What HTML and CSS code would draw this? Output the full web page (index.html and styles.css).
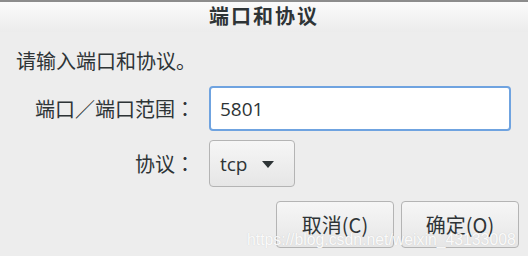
FILE: index.html
```html
<!DOCTYPE html>
<html lang="zh-CN">
<head>
  <meta charset="UTF-8">
  <title>端口和协议</title>
  <link rel="stylesheet" href="styles.css">
</head>
<body>
  <div class="dialog">
    <div class="titlebar">端口和协议</div>
    <div class="content">
      <p class="prompt">请输入端口和协议。</p>
      <div class="form">
        <label class="label" for="port">端口／端口范围<span class="colon" lang="zh-TW">：</span></label>
        <input class="entry" id="port" type="text" value="5801">
        <span class="label">协议<span class="colon" lang="zh-TW">：</span></span>
        <div>
          <button class="combo">tcp <span class="arrow"></span></button>
        </div>
      </div>
      <div class="actions">
        <button class="btn">取消(C)</button>
        <button class="btn">确定(O)</button>
      </div>
    </div>
    <div class="watermark">https://blog.csdn.net/weixin_43133008</div>
  </div>
</body>
</html>
```
FILE: styles.css
```css
body {
  margin: 0;
  background-color: #ededed;
  font-family: "Noto Sans CJK SC", "Liberation Sans", sans-serif;
  color: #2e3436;
}
.dialog {
  position: relative;
  width: 528px;
  height: 256px;
  overflow: hidden;
  border-top: 2px solid #8c8c8c;
  box-sizing: border-box;
  background-color: #ededed;
}
.titlebar {
  height: 30px;
  line-height: 28px;
  text-align: center;
  font-size: 20px;
  font-weight: bold;
  letter-spacing: 2px;
  background: linear-gradient(#fbfbfb, #ececec);
}
.content {
  padding: 0 17px 0 16px;
}
.prompt {
  margin: 14px 0 0 0;
  font-size: 20px;
  line-height: 30px;
}
.form {
  display: grid;
  grid-template-columns: 179px 1fr;
  column-gap: 14px;
  row-gap: 9px;
  align-items: center;
  margin-top: 10px;
}
.label {
  text-align: right;
  font-size: 20px;
}
.colon {
  font-family: "Noto Sans CJK TC", sans-serif;
}
.entry {
  height: 45px;
  box-sizing: border-box;
  border: 2px solid #6fa3e0;
  border-radius: 4px;
  padding: 0 9px;
  font-family: "Open Sans", "Liberation Sans", sans-serif;
  font-size: 19px;
  color: #2e3436;
  background-color: #fff;
  outline: none;
}
.combo {
  width: 86px;
  height: 47px;
  box-sizing: border-box;
  border: 1px solid #b4b4b4;
  border-radius: 4px;
  background: linear-gradient(#f6f6f6, #e6e6e6);
  font-family: "Open Sans", "Liberation Sans", sans-serif;
  font-size: 19px;
  color: #2e3436;
  padding: 0 0 0 10px;
  text-align: left;
}
.arrow {
  display: inline-block;
  width: 0;
  height: 0;
  margin-left: 10px;
  vertical-align: 3px;
  border-left: 6px solid transparent;
  border-right: 6px solid transparent;
  border-top: 7px solid #2e3436;
}
.actions {
  display: flex;
  justify-content: flex-end;
  gap: 7px;
  margin: 14px -8px 0 0;
}
.btn {
  width: 118px;
  height: 47px;
  border: 1px solid #b4b4b4;
  border-radius: 4px;
  background: linear-gradient(#f6f6f6, #e6e6e6);
  font-family: "Noto Sans CJK SC", "Liberation Sans", sans-serif;
  font-size: 20px;
  color: #2e3436;
}
.watermark {
  position: absolute;
  left: 247px;
  top: 229px;
  font-family: "Liberation Sans", sans-serif;
  font-size: 15.8px;
  color: rgba(255, 255, 255, 0.92);
  text-shadow: 0 0 1px rgba(150, 150, 150, 0.4);
  white-space: nowrap;
}
```
